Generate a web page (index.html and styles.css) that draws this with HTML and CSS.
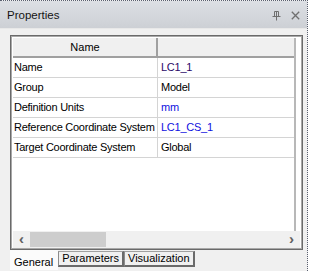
FILE: index.html
```html
<!DOCTYPE html>
<html>
<head>
<meta charset="utf-8">
<title>Properties</title>
<link rel="stylesheet" href="styles.css">
</head>
<body>
<div class="panel">
  <div class="titlebar">
    <span class="title">Properties</span>
    <span class="btns">
      <svg width="9" height="10" viewBox="0 0 9 10"><path d="M2.5 0.5h4v5h-4zM4.5 0.5v5M0.5 5.5h8M4.5 5.5v4" fill="none" stroke="#6f6f6f" stroke-width="1"/></svg>
      <svg width="9" height="9" viewBox="0 0 9 9"><path d="M0.8 0.8l7.4 7.4M8.2 0.8l-7.4 7.4" stroke="#6f6f6f" stroke-width="1.3"/></svg>
    </span>
  </div>
  <div class="body">
    <div class="frame">
      <div class="grid">
        <div class="row head"><div class="c1">Name</div><div class="c2"></div></div>
        <div class="row"><div class="c1">Name</div><div class="c2 navy">LC1_1</div></div>
        <div class="row"><div class="c1">Group</div><div class="c2">Model</div></div>
        <div class="row"><div class="c1">Definition Units</div><div class="c2 blue">mm</div></div>
        <div class="row"><div class="c1">Reference Coordinate System</div><div class="c2 blue">LC1_CS_1</div></div>
        <div class="row"><div class="c1">Target Coordinate System</div><div class="c2">Global</div></div>
      </div>
      <div class="hscroll">
        <span class="arrow">&lsaquo;</span>
        <span class="track"><span class="thumb"></span></span>
        <span class="arrow">&rsaquo;</span>
      </div>
    </div>
    <div class="tabs">
      <span class="tab active">General</span>
      <span class="tab">Parameters</span>
      <span class="tab">Visualization</span>
    </div>
  </div>
</div>
</body>
</html>
```
FILE: styles.css
```css
body {
  margin: 0;
  background-color: #ffffff;
  font-family: "Liberation Sans", Arial, sans-serif;
  font-size: 11px;
  color: #000000;
}

.panel {
  width: 308px;
  height: 271px;
  background-color: #f0f0f0;
  border-top: 1px dotted #5a6070;
  border-right: 1px dotted #5a6070;
  box-sizing: border-box;
}

.titlebar {
  height: 27px;
  display: flex;
  align-items: center;
  justify-content: space-between;
  padding: 0 7px 0 7px;
  background: linear-gradient(#dcdfe4, #cdd0d5);
  border-bottom: 1px solid #e8e8e8;
}

.title {
  font-size: 11.5px;
  color: #141414;
  padding-top: 1px;
}

.btns {
  display: flex;
  gap: 10px;
  align-items: center;
  padding-top: 2px;
}

.body {
  padding: 6px 4px 0 10px;
}

.frame {
  height: 215px;
  box-sizing: border-box;
  border: 1px solid #6a6a6a;
  box-shadow: inset 0 0 0 1px #a8a8a8;
  padding: 2px 2px 1px 2px;
  background-color: #ffffff;
  display: flex;
  flex-direction: column;
}

.grid {
  flex: 1;
  margin-right: 4px;
  border-right: 2px solid #b8b8b8;
}

.row {
  display: flex;
  height: 20px;
  line-height: 19px;
  border-bottom: 1px solid #d4d4d4;
  box-sizing: border-box;
  letter-spacing: -0.25px;
}

.c1 {
  width: 145px;
  padding-left: 1px;
  border-right: 1px solid #d4d4d4;
  box-sizing: border-box;
  white-space: nowrap;
  overflow: hidden;
}

.c2 {
  flex: 1;
  padding-left: 3px;
}

.head {
  height: 20px;
  background-color: #f0f0f0;
  border-bottom: 2px solid #a0a0a0;
  letter-spacing: 0;
}

.head .c1 {
  text-align: center;
  border-right: 2px solid #a0a0a0;
}

.navy {
  color: #2a0868;
}

.blue {
  color: #1010e0;
}

.hscroll {
  height: 17px;
  display: flex;
  background-color: #f0f0f0;
}

.arrow {
  width: 17px;
  text-align: center;
  font-size: 15px;
  font-weight: bold;
  line-height: 15px;
  color: #606060;
}

.track {
  flex: 1;
  padding: 1px 0;
}

.thumb {
  display: block;
  width: 76px;
  height: 15px;
  background-color: #cdcdcd;
}

.tabs {
  display: flex;
  height: 20px;
  align-items: flex-start;
}

.tab {
  height: 13px;
  margin-top: 1px;
  padding: 0 3px;
  line-height: 13px;
  background-color: #f0f0f0;
  border: 1px solid #8c8c8c;
  border-top-color: #a0a0a0;
  border-right: 2px solid #6a6a6a;
  border-bottom: 2px solid #6a6a6a;
}

.tab.active {
  height: 20px;
  margin-top: 0;
  padding: 0 5px 0 4px;
  line-height: 24px;
  background-color: #fbfbfb;
  border: none;
}
```
